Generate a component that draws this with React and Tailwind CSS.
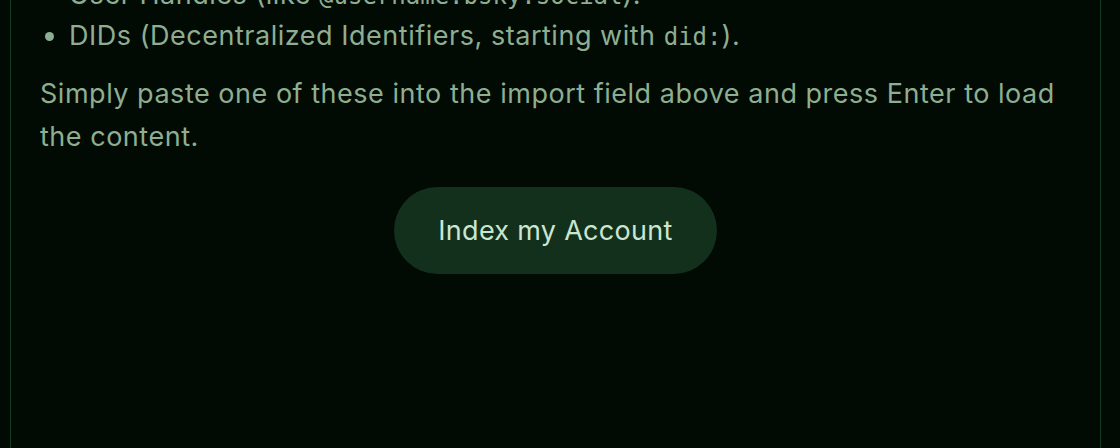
export default function App() {
  return (
    <div className="h-[448px] overflow-hidden bg-[#010a03] pl-[10px] pr-[19px] font-['Inter','Liberation_Sans',sans-serif]">
      <div className="-mt-[25px] h-[600px] border-x border-[#143a22] px-[29px] text-[27px] leading-[43px] tracking-[0.52px] text-[#8eae92]">
        <ul className="list-disc pl-[29px] leading-[40px] marker:text-[#8eae92]">
          <li>
            User Handles (like <code className="font-['DejaVu_Sans_Mono',monospace] text-[24px] tracking-normal">@username.bsky.social</code>).
          </li>
          <li>
            DIDs (Decentralized Identifiers, starting with{" "}
            <code className="font-['DejaVu_Sans_Mono',monospace] text-[24px] tracking-normal">did:</code>).
          </li>
        </ul>
        <p className="mt-[15px]">
          Simply paste one of these into the import field above and press Enter to load the content.
        </p>
        <div className="mt-[29px] flex justify-center">
          <button className="h-[87px] rounded-full bg-[#13301d] px-[44px] text-[27px] tracking-[0.3px] text-[#cbe6cf]">
            Index my Account
          </button>
        </div>
      </div>
    </div>
  );
}
